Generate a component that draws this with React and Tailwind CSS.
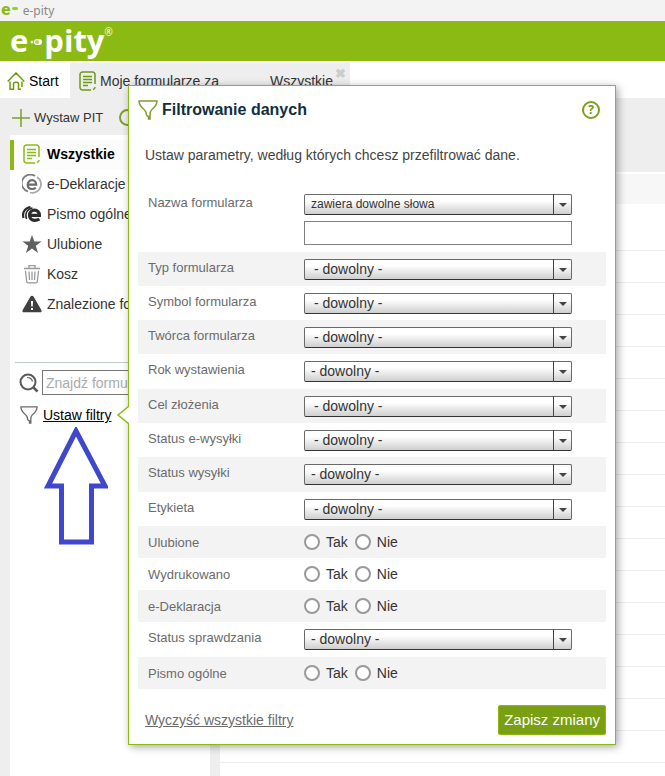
import { useId } from 'react';
import { clsx } from 'clsx';

const NAV_ITEMS = [
  { id: 'all',     label: 'Wszystkie',       icon: DocIcon, active: true },
  { id: 'edek',    label: 'e-Deklaracje',    icon: EDeclarationIcon },
  { id: 'letters', label: 'Pismo ogólne',    icon: LetterIcon },
  { id: 'fav',     label: 'Ulubione',        icon: FavIcon },
  { id: 'trash',   label: 'Kosz',            icon: TrashIcon },
  { id: 'found',   label: 'Znalezione form', icon: WarningIcon },
];

const FILTERS = [
  { id: 'type',    label: 'Typ formularza',    kind: 'multi' },
  { id: 'symbol',  label: 'Symbol formularza', kind: 'multi' },
  { id: 'author',  label: 'Twórca formularza', kind: 'multi' },
  { id: 'year',    label: 'Rok wystawienia',   kind: 'single' },
  { id: 'purpose', label: 'Cel złożenia',      kind: 'multi' },
  { id: 'esend',   label: 'Status e-wysyłki',  kind: 'multi' },
  { id: 'send',    label: 'Status wysyłki',    kind: 'single' },
  { id: 'tag',     label: 'Etykieta',          kind: 'multi' },
  { id: 'fav',     label: 'Ulubione',          kind: 'radio' },
  { id: 'printed', label: 'Wydrukowano',       kind: 'radio' },
  { id: 'edek',    label: 'e-Deklaracja',      kind: 'radio' },
  { id: 'check',   label: 'Status sprawdzania', kind: 'single' },
  { id: 'letter',  label: 'Pismo ogólne',      kind: 'radio' },
];

function DocIcon({ className = 'text-[#8cba14]' }) {
  return (
    <svg viewBox="0 0 18 20" className={clsx('h-5 w-[18px]', className)} fill="none" stroke="currentColor" strokeWidth="1.5">
      <path d="M16 13V3.500A2.500 2.500 0 0 0 13.500 1h-10A2.500 2.500 0 0 0 1 3.500v13A2.500 2.500 0 0 0 3.500 19H12M14 18.500c1.300-.3 2-1.200 2-2.500" />
      <path d="M4 5.500h9M4 8.500h9M4 11.500h9M4 14.500h5" />
    </svg>
  );
}

function EDeclarationIcon() {
  return (
    <svg viewBox="0 0 20 20" className="size-5" fill="none">
      <path d="M6 17.500A8.600 8.600 0 1 1 13 2" stroke="#7b7b7b" strokeWidth="1.800" />
      <path d="M15 3a8.600 8.600 0 0 1-7 15.500" stroke="#a8a8a8" strokeWidth="1.800" />
      <path d="M5.600 10.700h8.600C14.200 8 12.300 6.200 10 6.200S5.700 8 5.700 10.700s1.900 4.300 4.500 4.300c1.500 0 2.700-.5 3.600-1.300" stroke="#6b6b6b" strokeWidth="2.200" />
    </svg>
  );
}

function LetterIcon() {
  return (
    <svg viewBox="0 0 20 20" className="size-5" fill="none" stroke="#2b2b2b">
      <path d="M1.500 14C0 9 2.500 4 8.500 3" strokeWidth="2.200" />
      <path d="M4.500 15C2.500 10 5 5 10.500 4" strokeWidth="1.500" />
      <path d="M7.500 11.300h9.900C17.500 8.300 15.300 6.200 12.500 6.200S7.500 8.500 7.500 11.300s2 5 5.200 5c1.900 0 3.500-.5 4.700-1.300" strokeWidth="3.200" />
    </svg>
  );
}

function FavIcon() {
  return (
    <svg viewBox="0 0 20 20" className="size-5" fill="#5f5f5f">
      <path d="m10 1 2.300 6.500H19.500l-5.700 4.200L16 19l-6-4.400L4 19l2.200-7.300L.5 7.500h7.200z" />
    </svg>
  );
}

function TrashIcon() {
  return (
    <svg viewBox="0 0 20 20" className="size-5" fill="none" stroke="#999" strokeWidth="1.300">
      <path d="M2 4.500h16M7 4V1.700h6V4M3.500 7l1.200 10.500c.1.900.7 1.300 1.500 1.300h7.600c.8 0 1.400-.4 1.500-1.300L16.500 7" />
      <path d="m7 7.500.5 8.500M10 7.500V16M13 7.500l-.5 8.500" />
    </svg>
  );
}

function WarningIcon() {
  return (
    <svg viewBox="0 0 20 20" className="size-5">
      <path d="M8.500 2.600c.7-1.200 2.300-1.200 3 0l7.800 13.300c.7 1.300 0 2.400-1.400 2.400H2.100c-1.400 0-2.100-1.100-1.400-2.400z" fill="#3f3f3f" />
      <path d="M8.900 7h2.200l-.4 5.500H9.300zM9 14h2v2H9z" fill="#fff" />
    </svg>
  );
}

function FunnelIcon({ className }) {
  return (
    <svg viewBox="0 0 20 20" className={clsx('size-5', className)} fill="none" stroke="currentColor" strokeWidth="1.500">
      <path d="M8.500 15.500c0-3-.5-4.300-2-5.500C2.500 6.700 1 4 1 1h18c0 3-1.500 5.700-5.500 9-1.300 1.100-1.500 2.500-1.500 5v4h-1.500v-2.500l-2-1" />
    </svg>
  );
}

function HomeIcon() {
  return (
    <svg viewBox="0 0 18 18" className="size-[18px] text-[#6f9a12]" fill="none" stroke="currentColor" strokeWidth="1.500">
      <path d="M.7 9.500 9 1l8.300 8.500M3 9.500v7.700h3.500v-5.500c0-2 5-2 5 0v5.500H14M15 9.500V15" />
    </svg>
  );
}

function PlusIcon() {
  return (
    <svg viewBox="0 0 18 18" className="size-[18px] text-[#7d9f2c]" fill="none" stroke="currentColor" strokeWidth="1.500">
      <path d="M9 0v18M0 9h18" />
    </svg>
  );
}

function SearchIcon() {
  return (
    <svg viewBox="0 0 20 20" className="size-5 text-[#5a5a5a]" fill="none" stroke="currentColor">
      <circle cx="9" cy="9" r="7.500" strokeWidth="2" />
      <path d="M8 4.500c3 0 5 1.500 5.500 4" strokeWidth="1.200" />
      <path d="m14 14 4.500 4.500" strokeWidth="2.500" />
    </svg>
  );
}

function SelectBox({ id, kind, option }) {
  return (
    <div className="relative h-[21px] w-[268px]">
      <select
        id={id}
        className={clsx(
          'block h-full w-full appearance-none rounded-[2px] border border-[#6a6a6a] border-b-[#333] bg-linear-to-b from-white from-30% to-[#cfcfcf] leading-[19px] text-[#333]',
          kind === 'text' && 'pl-[6px] text-xs',
          kind === 'single' && 'pl-[6px] text-sm',
          kind === 'multi' && 'pl-[9px] text-sm'
        )}
      >
        <option>{option}</option>
      </select>
      <span className="pointer-events-none absolute inset-y-0 right-0 flex w-[19px] items-center justify-center border-l border-[#444]">
        <svg viewBox="0 0 8 4" className="h-1 w-2"><path d="M0 0h8L4 4z" fill="#444" /></svg>
      </span>
    </div>
  );
}

function RadioPair({ name }) {
  return (
    <div className="flex items-center gap-[7px]">
      {['Tak', 'Nie'].map((text) => (
        <label key={text} className="flex items-center gap-[6px] text-sm text-[#333]">
          <input type="radio" name={name} className="size-4 appearance-none rounded-full border-2 border-[#999] bg-white checked:bg-[#8cba14]" />
          {text}
        </label>
      ))}
    </div>
  );
}

function FilterRow({ filter, striped }) {
  const { id, label, kind } = filter;
  const fieldId = useId();
  const labelClass = 'w-[156px] shrink-0 pt-px text-[13px] leading-4 text-[#6b6b6b]';

  return (
    <div
      className={clsx(
        'flex pl-[10px]',
        kind === 'multi' && 'h-[34px] items-start pt-[7px]',
        kind === 'single' && 'h-[35px] items-start pt-[7px]',
        kind === 'radio' && 'h-8 items-center',
        striped && 'bg-[#f3f3f3]'
      )}
    >
      {kind === 'radio' ? (
        <>
          <span className={labelClass}>{label}</span>
          <RadioPair name={id} />
        </>
      ) : (
        <>
          <label htmlFor={fieldId} className={labelClass}>{label}</label>
          <SelectBox id={fieldId} kind={kind} option="- dowolny -" />
        </>
      )}
    </div>
  );
}

function FilterDialog() {
  return (
    <section
      role="dialog"
      aria-labelledby="filter-title"
      className="absolute top-[85px] right-[49px] left-32 border border-[#8cba14] bg-white px-[9px] pb-[9px] shadow-[2px_2px_8px_rgba(0,0,0,0.35)]"
    >
      {/* Pointer towards the sidebar link */}
      <svg viewBox="0 0 13 20" className="absolute top-[319px] -left-[13px] h-5 w-[13px]">
        <path d="M13 1 2 10l11 9" fill="#fff" stroke="#8cba14" strokeWidth="1.500" />
      </svg>

      <header className="flex h-12 items-center">
        <FunnelIcon className="text-[#7d9f2c]" />
        <h1 id="filter-title" className="ml-1 flex-1 text-base font-bold text-[#0f2f3f]">Filtrowanie danych</h1>
        <button aria-label="Pomoc" className="mr-[6px] size-[18px] rounded-full border-2 border-[#7ba01c] font-['Open_Sans'] text-xs leading-[14px] font-bold text-[#6f9a12]">?</button>
      </header>

      <p className="mt-[11px] ml-[7px] text-sm text-[#444]">
        Ustaw parametry, według których chcesz przefiltrować dane.
      </p>

      <form className="mt-[27px]">
        <div className="flex h-[60px] items-start pt-[2px] pl-[10px]">
          <label htmlFor="name-mode" className="w-[156px] shrink-0 pt-px text-[13px] leading-4 text-[#6b6b6b]">Nazwa formularza</label>
          <div className="space-y-[6px]">
            <SelectBox id="name-mode" kind="text" option="zawiera dowolne słowa" />
            <input aria-label="Nazwa formularza" className="block h-6 w-[268px] border border-[#808080] px-1 text-sm" />
          </div>
        </div>

        {FILTERS.map((filter, i) => (
          <FilterRow key={filter.id} filter={filter} striped={i % 2 === 0} />
        ))}

        <footer className="mt-4 flex items-center justify-between">
          <button type="reset" className="ml-[7px] text-sm text-[#6b6b6b] underline">Wyczyść wszystkie filtry</button>
          <button type="submit" className="h-[30px] rounded-[2px] border border-[#8cba14] bg-[#78a012] px-[5px] text-[15px] leading-[26px] text-white">Zapisz zmiany</button>
        </footer>
      </form>
    </section>
  );
}

function Sidebar() {
  return (
    <aside className="w-[220px] shrink-0 border-r-[10px] border-l-[10px] border-[#eee] bg-white pt-[5px]">
      <nav>
        {NAV_ITEMS.map(({ id, label, icon: Icon, active }) => (
          <a
            key={id}
            href={`#${id}`}
            className={clsx(
              'flex h-[30px] items-center border-l-4 pb-[2px] pl-2 text-sm whitespace-nowrap text-[#333]',
              active ? 'border-[#8cba14] bg-[#fcfcfc] font-bold text-black' : 'border-transparent'
            )}
          >
            <span className="mr-[5px] flex w-5 justify-center"><Icon /></span>
            {label}
          </a>
        ))}
      </nav>

      <div className="mt-[42px] ml-[5px] border-t border-[#c3cccb] pt-[7px]">
        <div className="flex items-center gap-[3px] pl-1">
          <SearchIcon />
          <input aria-label="Znajdź formularz" placeholder="Znajdź formularz" className="h-[25px] w-[150px] border border-[#777] px-[3px] text-sm placeholder:text-[#aaa]" />
        </div>
        <a href="#filters" className="mt-[10px] flex items-center gap-[5px] pl-[5px] text-sm text-black underline">
          <FunnelIcon className="size-[18px] text-[#6b6b6b]" />
          Ustaw filtry
        </a>
      </div>
    </aside>
  );
}

function Logo() {
  return (
    <div className="flex items-center pb-[2px] font-['Open_Sans'] text-[31px] leading-none font-bold text-white">
      <span>e</span>
      <svg viewBox="0 0 12 8" className="mx-[2px] mt-1 h-2 w-3">
        <circle cx="2" cy="4" r="1.500" fill="#fff" opacity=".8" />
        <rect x="4" y="1" width="8" height="6" rx="3" fill="#fff" />
        <rect x="5" y="2" width="4" height="4" rx="2" fill="#b5d35f" />
      </svg>
      <span>pity</span>
      <span className="mb-4 text-[10px] font-normal">®</span>
    </div>
  );
}

export default function App() {
  return (
    <div className="relative flex min-h-screen flex-col overflow-hidden bg-white font-['Liberation_Sans',Arial,sans-serif]">
      <div className="flex h-[21px] items-center gap-[5px] bg-[#f3f3f3] font-['Noto_Sans',sans-serif] text-xs text-[#888]">
        <span className="flex items-center pb-1 pl-px text-base leading-4 font-extrabold text-[#8cba14]">
          e
          <span className="ml-px h-[3px] w-[6px] rounded-full bg-[#8cdc14]" />
        </span>
        e-pity
      </div>

      <header className="flex h-10 items-center bg-[#8cba14] pl-[10px]">
        <Logo />
      </header>

      <div className="flex h-[37px] items-stretch text-sm text-[#333]">
        <a href="#start" className="flex w-[70px] items-center gap-1 pt-[2px] pl-[7px] text-black"><HomeIcon />Start</a>
        <div className="mt-[2px] flex w-[280px] items-center bg-[#eee] pt-px pl-[9px]">
          <DocIcon className="text-[#6f9a12]" />
          <a href="#forms" className="ml-[3px] w-[170px]">Moje formularze za</a>
          <a href="#all">Wszystkie</a>
          <button aria-label="Zamknij" className="mb-4 ml-[2px] text-[13px] leading-none font-bold text-[#ccc]">✖</button>
        </div>
      </div>

      <div className="flex h-[37px] items-center bg-[#eee] pt-[2px] pl-3 text-[13px] text-[#333]">
        <button className="flex items-center gap-1">
          <PlusIcon />
          Wystaw PIT
        </button>
        <span className="ml-4 size-[17px] rounded-full border-2 border-[#7d9f2c]" />
      </div>

      <div className="flex flex-1">
        <Sidebar />
        <main className="flex-1">
          <div className="h-[37px] bg-[#eee]" />
          <div className="mt-[2px] h-[30px] bg-[#f7f7f7]" />
          <div className="mt-[15px]">
            {Array.from({ length: 17 }, (_, i) => (
              <div key={i} className="h-8 border-b border-[#ececec]" />
            ))}
          </div>
        </main>
      </div>

      <FilterDialog />

      {/* Hint arrow under the filter link */}
      <svg viewBox="0 0 64 118" className="absolute top-[427px] left-[44px] h-[118px] w-16" aria-hidden="true">
        <path d="M32 4 4 59h13.500v56h30V59H61z" fill="none" stroke="#3f48cc" strokeWidth="5" />
      </svg>
    </div>
  );
}
